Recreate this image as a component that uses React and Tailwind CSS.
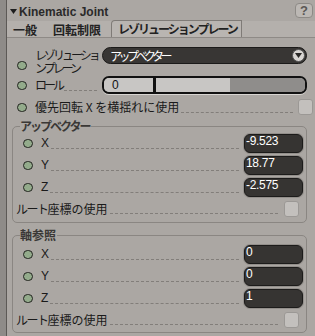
import React from "react";

const FONT = { fontFamily: '"Noto Sans CJK JP", "Liberation Sans", sans-serif' };
const LAT = { fontFamily: '"Liberation Sans", sans-serif' };

// katakana in the source font is narrower than Noto's full-width glyphs
const K = ({ children, t = "tracking-[-3px]" }) => <span className={t}>{children}</span>;

const Dot = () => (
  <span className="inline-block w-[10px] h-[9px] rounded-full bg-[#93ab8b] border border-[#22231f] shrink-0" />
);

const Leader = ({ end = "mr-[5px]" }) => (
  <span className={`flex-1 ml-[2px] ${end} mt-[10px] border-b border-dashed border-[#827e7a]`} />
);

const Check = () => (
  <span className="w-[15px] h-[16px] rounded-[3px] bg-[#c3c0bd] border border-[#9b9895] shrink-0" />
);

const NumField = ({ value }) => (
  <div
    className="w-[59px] h-[19px] rounded-[6px] bg-[#363432] border border-[#1c1b1a] shadow-[0_0_0_1px_#938f8b] text-white text-[12px] leading-[13px] pl-[1px] tracking-[-0.3px]"
    style={LAT}
  >
    {value}
  </div>
);

const AxisRow = ({ axis, value }) => (
  <div className="flex items-center h-[22px] pl-[10px] pr-[3px]">
    <Dot />
    <span className="ml-[8px] text-[12px] text-[#1a1a1a]" style={LAT}>{axis}</span>
    <Leader />
    <NumField value={value} />
  </div>
);

const Group = ({ title, rows, mt, pt, pb }) => (
  <div className={`relative ml-[5px] mr-[8px] ${mt} ${pt} ${pb} border border-[#8a8682] rounded-[5px]`}>
    <span className="absolute left-[7px] top-[-7px] pr-[1px] bg-[#aba7a3] text-[12px] leading-[12px] font-bold text-[#3a3836]">{title}</span>
    {rows.map((r) => (
      <AxisRow key={r[0]} axis={r[0]} value={r[1]} />
    ))}
    <div className="flex items-center h-[21px] pl-[3px] pr-[7px]">
      <span className="text-[12px] text-[#1a1a1a]"><K t="tracking-[-1.5px]">ルート</K>座標の使用</span>
      <Leader end="mr-[6px]" />
      <Check />
    </div>
  </div>
);

export default function App() {
  return (
    <div className="flex w-[315px] h-[336px] bg-[#aba7a3] overflow-hidden" style={FONT}>
      <div className="w-[7px] bg-[#8e8b88] border-r border-[#5c5956]" />
      <div className="flex-1 flex flex-col">
        <div className="flex items-center h-[21px] pl-[3px] pr-[2px]">
          <svg width="7" height="5" viewBox="0 0 7 5" className="mt-[2px]"><path d="M0 0 H7 L3.5 5 Z" fill="#1e1e1e" /></svg>
          <span className="ml-[2px] mt-[2px] text-[12px] font-bold text-[#2a2a2a]" style={LAT}>Kinematic Joint</span>
          <span className="ml-auto w-[18px] h-[15px] rounded-[4px] bg-[#bcb8b4] border border-[#8d8a86] flex items-center justify-center text-[13px] font-bold text-[#5a5754]" style={LAT}>?</span>
        </div>
        <div className="flex items-end h-[17px] bg-[#b4b0ac] border-b border-[#8e8a86] text-[12px] font-bold text-[#222]">
          <span className="ml-[6px] leading-[15px]">一般</span>
          <span className="ml-[16px] leading-[15px]">回転制限</span>
          <span className="ml-[10px] pl-[6px] pr-[4px] h-[17px] leading-[16px] bg-[#b9b5b1] border-l border-t border-r border-[#7f7b77] rounded-tl-[4px]">
            <K t="tracking-[-2px]">レゾリューションプレーン</K>
          </span>
        </div>

        <div className="flex items-start mt-[9px] pl-[10px] pr-[8px]">
          <span className="mt-[4px]"><Dot /></span>
          <span className="ml-[8px] mt-[1px] w-[64px] text-[12px] leading-[13px] text-[#1a1a1a]">
            <K>レゾリューショ</K>
            <br />
            <K>ンプレーン</K>
          </span>
          <div className="flex-1 ml-[3px] h-[17px] rounded-full bg-[#383634] border border-[#1b1a19] flex items-center pl-[7px] pr-[1px] text-white text-[12px]">
            <K t="tracking-[-3.5px]">アップベクター</K>
            <span className="ml-auto w-[13px] h-[13px] rounded-full bg-[#d9d6d3] border border-[#555] flex items-center justify-center">
              <svg width="7" height="5" viewBox="0 0 7 5"><path d="M0 0 H7 L3.5 5 Z" fill="#2b2a28" /></svg>
            </span>
          </div>
        </div>

        <div className="flex items-center mt-[1px] h-[18px] pl-[10px] pr-[8px]">
          <Dot />
          <span className="ml-[8px] text-[12px] text-[#1a1a1a]"><K>ロール</K></span>
          <Leader />
          <div className="w-[205px] h-[18px] rounded-[7px] border-[2px] border-[#111] flex overflow-hidden shadow-[0_1px_0_#d8d5d2]">
            <div className="w-[126px] bg-[#c8c6c4] relative">
              <span className="absolute left-[8px] top-[-2px] text-[12px] text-[#111]" style={LAT}>0</span>
              <span className="absolute left-[49px] top-0 bottom-0 w-[3px] bg-[#111]" />
            </div>
            <div className="flex-1 bg-[#8f8d8b]" />
          </div>
        </div>

        <div className="flex items-center mt-[5px] h-[16px] pl-[10px] pr-[2px]">
          <Dot />
          <span className="ml-[8px] text-[12px] text-[#1a1a1a]">優先回転 X を横揺れに使用</span>
          <Leader />
          <Check />
        </div>

        <Group
          title={<K t="tracking-[-2px]">アップベクター</K>}
          rows={[["X", "-9.523"], ["Y", "18.77"], ["Z", "-2.575"]]}
          mt="mt-[11px]"
          pt="pt-[5px]"
          pb="pb-[3px]"
        />
        <Group
          title="軸参照"
          rows={[["X", "0"], ["Y", "0"], ["Z", "1"]]}
          mt="mt-[12px]"
          pt="pt-[7px]"
          pb="pb-[2px]"
        />
      </div>
    </div>
  );
}
